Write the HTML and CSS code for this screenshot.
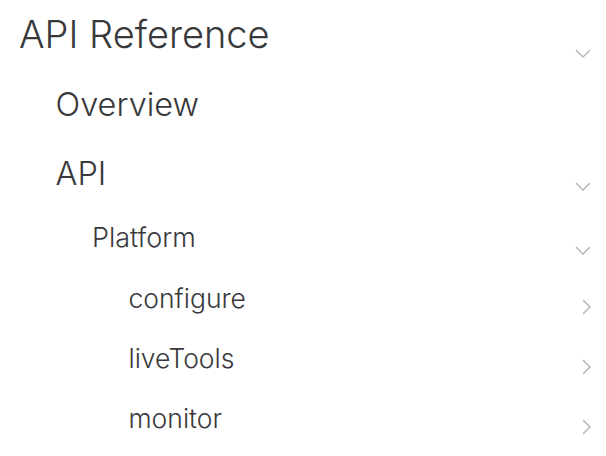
FILE: index.html
```html
<!DOCTYPE html>
<html lang="en">
<head>
<meta charset="utf-8">
<title>API Reference</title>
<link rel="stylesheet" href="styles.css">
</head>
<body>
<nav class="tree">
  <ul class="level level-0">
    <li>
      <div class="row row-0">
        <span class="label">API Reference</span>
        <span class="toggle toggle-root"><svg width="16" height="9" viewBox="0 0 16 9"><path d="M1 1L8 8L15 1"/></svg></span>
      </div>
      <ul class="level level-1">
        <li>
          <div class="row row-overview">
            <span class="label">Overview</span>
          </div>
        </li>
        <li>
          <div class="row row-api">
            <span class="label">API</span>
            <span class="toggle toggle-api"><svg width="16" height="9" viewBox="0 0 16 9"><path d="M1 1L8 8L15 1"/></svg></span>
          </div>
          <ul class="level level-2">
            <li>
              <div class="row row-2">
                <span class="label">Platform</span>
                <span class="toggle toggle-platform"><svg width="16" height="9" viewBox="0 0 16 9"><path d="M1 1L8 8L15 1"/></svg></span>
              </div>
              <ul class="level level-3">
                <li>
                  <div class="row row-3">
                    <span class="label">configure</span>
                    <span class="toggle toggle-leaf"><svg width="9" height="16" viewBox="0 0 9 16"><path d="M1 1L8 8L1 15"/></svg></span>
                  </div>
                </li>
                <li>
                  <div class="row row-3">
                    <span class="label">liveTools</span>
                    <span class="toggle toggle-leaf"><svg width="9" height="16" viewBox="0 0 9 16"><path d="M1 1L8 8L1 15"/></svg></span>
                  </div>
                </li>
                <li>
                  <div class="row row-3">
                    <span class="label">monitor</span>
                    <span class="toggle toggle-leaf"><svg width="9" height="16" viewBox="0 0 9 16"><path d="M1 1L8 8L1 15"/></svg></span>
                  </div>
                </li>
              </ul>
            </li>
          </ul>
        </li>
      </ul>
    </li>
  </ul>
</nav>
</body>
</html>
```
FILE: styles.css
```css
html, body {
  margin: 0;
  padding: 0;
  background: #ffffff;
}

body {
  font-family: Inter, "Liberation Sans", Arial, sans-serif;
  font-weight: 300;
  color: #39393b;
  width: 606px;
  height: 456px;
  overflow: hidden;
}

.tree {
  padding-top: 6px;
}

.level {
  list-style: none;
  margin: 0;
  padding: 0;
}

.level-0 {
  padding-left: 19px;
}

.level-1,
.level-2,
.level-3 {
  padding-left: 36.5px;
}

.row {
  display: flex;
  align-items: flex-start;
  justify-content: space-between;
  padding-right: 15px;
}

.label {
  white-space: nowrap;
}

.row-0 {
  height: 57px;
  font-size: 38px;
  line-height: 56px;
}

.row-overview {
  height: 82px;
  font-size: 32.5px;
  line-height: 84px;
}

.row-api {
  height: 62.6px;
  font-size: 32.5px;
  line-height: 58px;
}

.row-2 {
  height: 60px;
  font-size: 27px;
  line-height: 59px;
}

.row-3 {
  height: 60px;
  font-size: 26.5px;
  line-height: 60px;
}

.toggle {
  display: flex;
  justify-content: flex-end;
  width: 16px;
}

.toggle svg {
  display: block;
  fill: none;
  stroke: #b8b8b8;
  stroke-width: 1.5;
}

.toggle-root {
  margin-top: 42.5px;
}

.toggle-api {
  margin-top: 36.5px;
}

.toggle-platform {
  margin-top: 38px;
}

.toggle-leaf {
  margin-top: 31px;
}
```
